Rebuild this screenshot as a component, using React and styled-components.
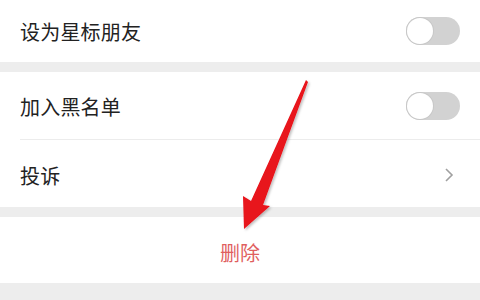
import React from 'react';
import styled, { createGlobalStyle } from 'styled-components';

const GlobalStyle = createGlobalStyle`
  html, body {
    margin: 0;
    padding: 0;
    background: #ededed;
  }
  body {
    font-family: "Noto Sans CJK SC", "Noto Sans", sans-serif;
  }
`;

const Page = styled.div`
  position: relative;
  width: 480px;
  height: 300px;
  overflow: hidden;
  background: #ededed;
`;

const Group = styled.div`
  background: #fff;
  margin-bottom: ${p => p.gap || 10}px;
`;

const Row = styled.div`
  height: ${p => p.h || 67}px;
  display: flex;
  align-items: center;
  justify-content: space-between;
  padding: 0 20px 0 20px;
  position: relative;
  ${p => p.divider && `
    &::after {
      content: '';
      position: absolute;
      left: 20px;
      right: 0;
      bottom: 0;
      height: 1px;
      background: #ececec;
    }
  `}
`;

const Label = styled.span`
  font-size: 20px;
  color: #222;
  letter-spacing: 0.2px;
  padding-top: ${p => p.shift || 0}px;
`;

const Track = styled.div`
  width: 54px;
  height: 28px;
  border-radius: 14px;
  background: #d2d2d2;
  display: flex;
  align-items: center;
  padding: 1px;
  box-sizing: border-box;
`;

const Knob = styled.div`
  width: 26px;
  height: 26px;
  border-radius: 50%;
  background: #fff;
  box-shadow: 0 0 0 1px #c8c8c8;
`;

const Chevron = styled.svg`
  width: 10px;
  height: 16px;
  margin-right: 6px;
  margin-top: 2px;
`;

const DeleteRow = styled.div`
  height: 66px;
  display: flex;
  align-items: center;
  justify-content: center;
  background: #fff;
`;

const DeleteText = styled.span`
  font-size: 20px;
  color: #df5f5f;
  padding-top: 5px;
`;

const Arrow = styled.svg`
  position: absolute;
  left: 0;
  top: 0;
  pointer-events: none;
`;

const Toggle = () => (
  <Track>
    <Knob />
  </Track>
);

export default function App() {
  return (
    <Page>
      <GlobalStyle />
      <Group>
        <Row h={62}>
          <Label>设为星标朋友</Label>
          <Toggle />
        </Row>
      </Group>
      <Group>
        <Row h={68} divider>
          <Label>加入黑名单</Label>
          <Toggle />
        </Row>
        <Row h={67}>
          <Label shift={3}>投诉</Label>
          <Chevron viewBox="0 0 10 16">
            <path d="M2 2 L8 8 L2 14" fill="none" stroke="#a0a0a0" strokeWidth="1.6" />
          </Chevron>
        </Row>
      </Group>
      <DeleteRow>
        <DeleteText>删除</DeleteText>
      </DeleteRow>
      <Arrow width="480" height="300" viewBox="0 0 480 300">
        <defs>
          <filter id="sh" x="-20%" y="-20%" width="140%" height="140%">
            <feDropShadow dx="1.5" dy="1.5" stdDeviation="1.2" floodColor="#000" floodOpacity="0.25" />
          </filter>
        </defs>
        <polygon
          points="306,80 308,82 263,205 270,206 244,229 243,196 251,201"
          fill="#e8121a"
          filter="url(#sh)"
        />
      </Arrow>
    </Page>
  );
}
